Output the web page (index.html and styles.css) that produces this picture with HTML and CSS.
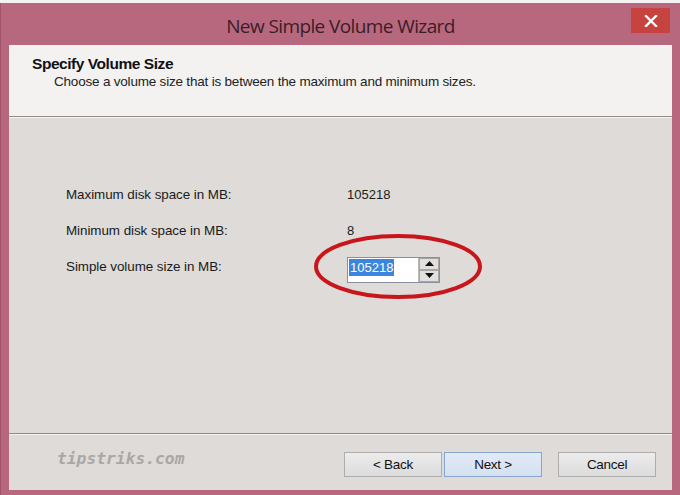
FILE: index.html
```html
<!DOCTYPE html>
<html>
<head>
<meta charset="utf-8">
<link rel="stylesheet" href="styles.css">
</head>
<body>
<div class="window">
  <div class="titlebar">
    <div class="title">New Simple Volume Wizard</div>
    <div class="close">
      <svg width="14" height="12" viewBox="0 0 14 12"><path d="M2 1 L12 11 M12 1 L2 11" stroke="#fff" stroke-width="2.4" stroke-linecap="square"/></svg>
    </div>
  </div>
  <div class="client">
    <div class="header">
      <div class="h-title">Specify Volume Size</div>
      <div class="h-sub">Choose a volume size that is between the maximum and minimum sizes.</div>
    </div>
    <div class="content">
      <div class="grid">
        <div class="label">Maximum disk space in MB:</div>
        <div class="value">105218</div>
        <div class="label">Minimum disk space in MB:</div>
        <div class="value">8</div>
        <div class="label">Simple volume size in MB:</div>
        <div class="value">
          <div class="spin">
            <div class="field"><span class="sel">105218</span></div>
            <div class="arrows">
              <div class="arrow"><svg width="9" height="5" viewBox="0 0 9 5"><path d="M0 5 L4.5 0 L9 5 Z" fill="#111"/></svg></div>
              <div class="arrow"><svg width="9" height="5" viewBox="0 0 9 5"><path d="M0 0 L4.5 5 L9 0 Z" fill="#111"/></svg></div>
            </div>
            <svg class="ring" width="172" height="67" viewBox="0 0 172 67"><ellipse cx="86" cy="33.5" rx="82" ry="30.5" fill="none" stroke="#c8161c" stroke-width="4"/></svg>
          </div>
        </div>
      </div>
    </div>
    <div class="footer">
      <div class="mark">tipstriks.com</div>
      <div class="buttons">
        <button class="btn">&lt; Back</button>
        <button class="btn next">Next &gt;</button>
        <button class="btn cancel">Cancel</button>
      </div>
    </div>
  </div>
</div>
</body>
</html>
```

FILE: styles.css
```css
html, body {
  margin: 0;
  padding: 0;
  background: #f4f2f2;
}
body {
  width: 680px;
  height: 495px;
  overflow: hidden;
  font-family: "Liberation Sans", Arial, sans-serif;
}
.window {
  margin-top: 3px;
  height: 492px;
  box-sizing: border-box;
  background: #b7687e;
  padding: 0 8px 5px 8px;
  display: flex;
  flex-direction: column;
  border-left: 1px solid #a35469;
}
.titlebar {
  height: 42px;
  position: relative;
  display: flex;
  align-items: center;
  justify-content: center;
}
.title {
  font-family: "Open Sans", "Noto Sans", sans-serif;
  font-size: 19px;
  color: #3b1d27;
  letter-spacing: -0.6px;
  margin-top: 4px;
}
.close {
  position: absolute;
  right: 2px;
  top: 5px;
  width: 39px;
  height: 25px;
  background: #c7433f;
  display: flex;
  align-items: center;
  justify-content: center;
}
.client {
  flex: 1;
  display: flex;
  flex-direction: column;
  background: #dedbd8;
}
.header {
  height: 72px;
  background: #f3f2f1;
  border-bottom: 1px solid #8e8c8b;
  box-sizing: border-box;
  padding: 10px 0 0 23px;
}
.h-title {
  font-size: 15.5px;
  font-weight: bold;
  color: #111;
  letter-spacing: -0.45px;
}
.h-sub {
  font-size: 13.5px;
  color: #222;
  margin: 1px 0 0 22px;
  letter-spacing: -0.2px;
}
.content {
  flex: 1;
  padding: 58px 0 0 57px;
  border-top: 1px solid #f6f5f4;
  border-bottom: 1px solid #8e8c8b;
}
.grid {
  display: grid;
  grid-template-columns: 281px auto;
  grid-auto-rows: 36px;
  align-items: center;
}
.label, .value {
  font-size: 13.4px;
  color: #1a1a1a;
  letter-spacing: -0.05px;
}
.value {
  font-size: 13px;
  letter-spacing: 0;
}
.spin {
  position: relative;
  display: flex;
  width: 93px;
  height: 26px;
  margin-top: 7px;
  border: 1px solid #8a8fa0;
  background: #fff;
  box-sizing: border-box;
}
.field {
  flex: 1;
  padding: 1px 0 0 1px;
}
.sel {
  display: inline-block;
  background: #3b86dc;
  color: #fff;
  padding: 0 1px;
  line-height: 17px;
}
.arrows {
  width: 20px;
  display: flex;
  flex-direction: column;
  border-left: 1px solid #b8b8b8;
}
.arrow {
  flex: 1;
  display: flex;
  align-items: center;
  justify-content: center;
  background: #e2e0de;
  border: 1px solid #a8a6a4;
}
.ring {
  position: absolute;
  left: -36px;
  top: -25px;
}
.footer {
  height: 56px;
  border-top: 1px solid #f4f3f2;
  box-sizing: border-box;
  display: flex;
  align-items: flex-start;
  justify-content: space-between;
  padding: 17px 16px 0 50px;
}
.mark {
  font-family: "DejaVu Sans Mono", "Liberation Mono", monospace;
  font-style: italic;
  font-weight: bold;
  font-size: 16.3px;
  color: #aaa7a5;
  margin-top: -3px;
  margin-left: -2px;
}
.buttons {
  display: flex;
  gap: 2px;
}
.btn {
  width: 98px;
  height: 25px;
  border: 1px solid #adadad;
  background: linear-gradient(#ececec, #dcdcdc);
  font-family: "Liberation Sans", Arial, sans-serif;
  font-size: 13.5px;
  color: #111;
  padding: 0;
  letter-spacing: -0.3px;
}
.next {
  background: linear-gradient(#e2eaf6, #d4e0f2);
  border-color: #86a6cf;
}
.cancel {
  margin-left: 14px;
}
```
